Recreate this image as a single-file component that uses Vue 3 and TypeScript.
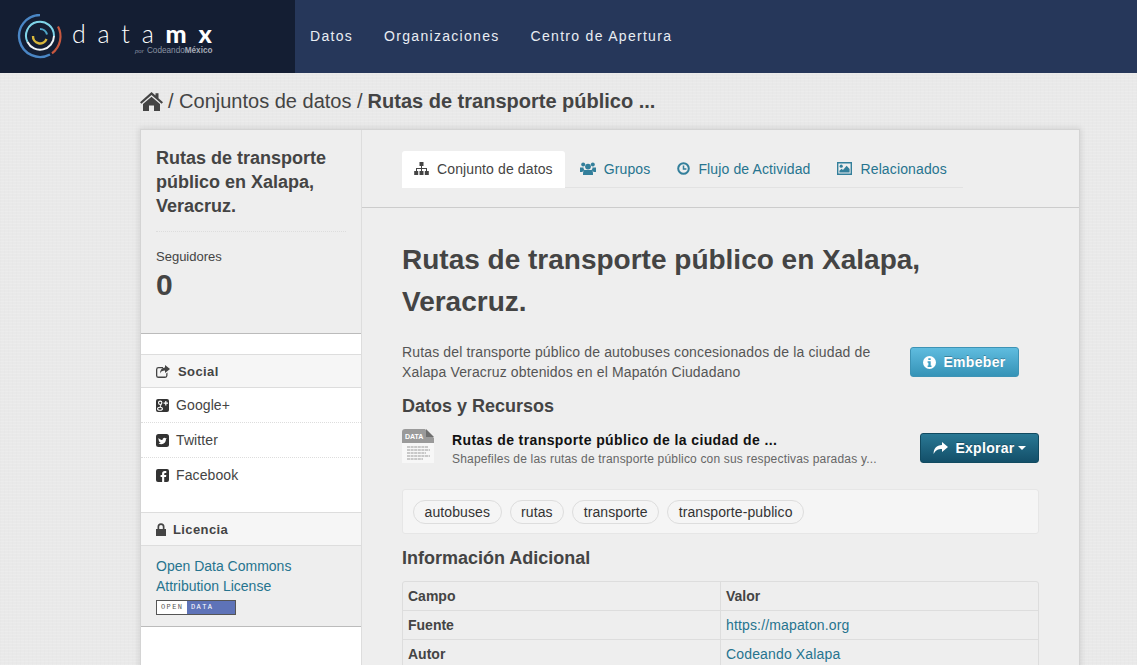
<script setup lang="ts">
const navLinks = ['Datos', 'Organizaciones', 'Centro de Apertura']
const tags = ['autobuses', 'rutas', 'transporte', 'transporte-publico']
const rows = [
  { field: 'Fuente', value: 'https://mapaton.org' },
  { field: 'Autor', value: 'Codeando Xalapa' }
]
</script>

<template>
  <div class="page">
    <header class="topbar">
      <a class="brand">
        <svg class="brand-mark" width="46" height="46" viewBox="0 0 46 46" fill="none">
          <path d="M23 1A21 21 0 1 0 33 40.5" stroke="#4a86c5" stroke-width="2.4" />
          <path d="M41 12.5A21 21 0 0 1 35 39.3" stroke="#c8583f" stroke-width="2.2" />
          <path d="M10.5 28A14 14 0 1 1 37 22" stroke="#7fd4e8" stroke-width="2" />
          <path d="M37 22A14 14 0 0 1 10.5 28" stroke="#f2f6f8" stroke-width="2" />
          <path d="M16 22A7 7 0 0 0 29.5 25" stroke="#d9b83c" stroke-width="2.4" />
          <path d="M23 15A7 7 0 0 1 30 20.5" stroke="#4fa6c8" stroke-width="2" />
        </svg>
        <span class="brand-text">
          <span class="brand-name">data<b>mx</b></span>
          <span class="brand-by"><i>por</i> Codeando<b>México</b></span>
        </span>
      </a>
      <nav class="nav">
        <a v-for="link in navLinks" :key="link">{{ link }}</a>
      </nav>
    </header>

    <main class="container">
      <div class="crumbs">
        <svg width="23" height="19" viewBox="0 0 23 19" fill="#444">
          <path d="M11.5 0 15.5 3.5V1.2H18.5V6.2L23 10.2 21.6 11.7 11.5 3 1.4 11.7 0 10.2Z" />
          <path d="M11.5 4.8 20 12V19H14V13.5H9V19H3V12Z" />
        </svg>
        <span>/ Conjuntos de datos /</span>
        <b>Rutas de transporte público ...</b>
      </div>

      <div class="wrapper">
        <aside class="sidebar">
          <section class="side-info">
            <h2>Rutas de transporte público en Xalapa, Veracruz.</h2>
            <div class="followers">
              <span>Seguidores</span>
              <strong>0</strong>
            </div>
          </section>

          <section class="social">
            <h3>
              <svg width="14" height="13" viewBox="0 0 14 13" fill="#444">
                <path d="M2.5 2H7V3.2H2.5A1.2 1.2 0 0 0 1.3 4.4V10.4A1.2 1.2 0 0 0 2.5 11.6H9A1.2 1.2 0 0 0 10.2 10.4V8.5L11.5 7.4V10.4A2.5 2.5 0 0 1 9 13H2.5A2.5 2.5 0 0 1 0 10.4V4.4A2.5 2.5 0 0 1 2.5 2Z" />
                <path d="M9 0 14 4 9 8V5.6C6.5 5.6 5 6.3 4 8.6 4 5 6 2.8 9 2.5Z" />
              </svg>
              Social
            </h3>
            <ul>
              <li>
                <svg width="13" height="13" viewBox="0 0 13 13">
                  <rect width="13" height="13" rx="2" fill="#333" />
                  <circle cx="4.2" cy="3.8" r="1.7" fill="none" stroke="#fff" stroke-width="1.1" />
                  <ellipse cx="4" cy="9.8" rx="2.4" ry="1.5" fill="none" stroke="#fff" stroke-width="1.1" />
                  <path d="M5 5.6 4.2 8" stroke="#fff" />
                  <path d="M9.8 2V6.4M7.6 4.2H12" stroke="#fff" stroke-width="1.2" />
                </svg>
                Google+
              </li>
              <li>
                <svg width="13" height="13" viewBox="0 0 13 13">
                  <rect width="13" height="13" rx="2.5" fill="#333" />
                  <path d="M2.6 4C4 5.4 5 6 6.5 6 6.4 4 8.4 3 9.6 4.2L10.8 3.9 10 5C10 8 8 10.2 5.4 10.2 4.2 10.2 3.2 9.9 2.4 9.3 3.4 9.4 4.2 9.1 4.9 8.6 3.9 8.4 3.4 7.9 3.1 7.2 2.7 6.2 2.3 5 2.6 4Z" fill="#fff" />
                </svg>
                Twitter
              </li>
              <li>
                <svg width="13" height="13" viewBox="0 0 13 13">
                  <rect width="13" height="13" rx="2" fill="#333" />
                  <path d="M8.2 13V8H10L10.3 6H8.2V4.8C8.2 4.2 8.5 3.9 9.1 3.9H10.3V2.1H8.7C7 2.1 6.1 3.1 6.1 4.6V6H4.6V8H6.1V13Z" fill="#fff" />
                </svg>
                Facebook
              </li>
            </ul>
          </section>

          <section class="license">
            <h3>
              <svg width="10" height="13" viewBox="0 0 10 13" fill="#444">
                <path d="M0 6H1.5V3.7A3.5 3.5 0 0 1 8.5 3.7V6H10V13H0ZM3.2 6H6.8V3.7A1.8 1.8 0 0 0 3.2 3.7Z" fill-rule="evenodd" />
              </svg>
              Licencia
            </h3>
            <div class="license-body">
              <a>Open Data Commons Attribution License</a>
              <span class="od-badge"><span>OPEN</span><span class="od-data">DATA</span></span>
            </div>
          </section>
        </aside>

        <div class="content">
          <div class="tabs-row">
            <ul class="tabs">
              <li class="active">
                <svg width="15" height="13" viewBox="0 0 15 13" fill="#444">
                  <path d="M5.5 0H9.5V4H8V6H13V9H14.8V13H10.8V9H12V7H8V9H9.5V13H5.5V9H7V7H3V9H4.2V13H.2V9H2V6H7V4H5.5Z" />
                </svg>
                Conjunto de datos
              </li>
              <li>
                <svg width="16" height="13" viewBox="0 0 16 13" fill="#337f9b">
                  <circle cx="3.2" cy="2.6" r="2" />
                  <circle cx="12.8" cy="2.6" r="2" />
                  <path d="M0 5.6H3.6C3.4 6.6 3.8 7.6 4.6 8.2 3.4 8.7 2.6 9.4 2.4 10H0Z" />
                  <path d="M16 5.6H12.4C12.6 6.6 12.2 7.6 11.4 8.2 12.6 8.7 13.4 9.4 13.6 10H16Z" />
                  <circle cx="8" cy="4.6" r="2.9" />
                  <path d="M4.4 8H11.6C12.8 8.6 13 10 13 13H3C3 10 3.2 8.6 4.4 8Z" />
                </svg>
                Grupos
              </li>
              <li>
                <svg width="13" height="13" viewBox="0 0 13 13" fill="none" stroke="#337f9b">
                  <circle cx="6.5" cy="6.5" r="5.3" stroke-width="2" />
                  <path d="M6.5 3.4V7H9.4" stroke-width="1.5" />
                </svg>
                Flujo de Actividad
              </li>
              <li>
                <svg width="15" height="13" viewBox="0 0 15 13" fill="#337f9b">
                  <path d="M0 0H15V13H0ZM1.4 1.4V11.6H13.6V1.4Z" fill-rule="evenodd" />
                  <circle cx="4.2" cy="4.2" r="1.6" />
                  <path d="M2.4 10.6V8.8L4.6 6.8 6 8 9.6 3.8 12.6 7V10.6Z" />
                </svg>
                Relacionados
              </li>
            </ul>
          </div>

          <article class="body">
            <h1>Rutas de transporte público en Xalapa, Veracruz.</h1>

            <div class="intro">
              <p>Rutas del transporte público de autobuses concesionados de la ciudad de Xalapa Veracruz obtenidos en el Mapatón Ciudadano</p>
              <button class="btn btn-info" type="button">
                <svg width="13" height="13" viewBox="0 0 13 13">
                  <circle cx="6.5" cy="6.5" r="6.5" fill="#fff" />
                  <path d="M5.3 2.2H7.7V4.1H5.3ZM4.6 5.2H7.7V9.4H8.5V10.9H4.6V9.4H5.4V6.7H4.6Z" fill="#3e9fc4" />
                </svg>
                Embeber
              </button>
            </div>

            <h3 class="heading">Datos y Recursos</h3>

            <div class="resource">
              <svg class="file-icon" width="32" height="34" viewBox="0 0 32 34">
                <path d="M0 3Q0 0 3 0H23L32 9V34H0Z" fill="#f7f7f7" />
                <path d="M0 3Q0 0 3 0H23L32 9V14H0Z" fill="#9a9a9a" />
                <path d="M24 0 32 8H24Z" fill="#6f6f6f" />
                <path d="M5 18H26M5 21H28M5 24H24M5 27H28M5 30H21" stroke="#999" stroke-dasharray="3 .6" />
                <text x="3" y="10" class="file-label">DATA</text>
              </svg>
              <div class="resource-text">
                <b>Rutas de transporte público de la ciudad de ...</b>
                <span>Shapefiles de las rutas de transporte público con sus respectivas paradas y...</span>
              </div>
              <button class="btn btn-primary" type="button">
                <svg width="15" height="12" viewBox="0 0 15 12" fill="#fff">
                  <path d="M9 0 15 5 9 10V7C5 7 2.6 8 .6 12 .6 6.5 3.5 3.3 9 3Z" />
                </svg>
                Explorar
                <i class="caret"></i>
              </button>
            </div>

            <div class="tags">
              <span v-for="tag in tags" :key="tag">{{ tag }}</span>
            </div>

            <h3 class="heading heading-info">Información Adicional</h3>

            <table>
              <thead>
                <tr>
                  <th>Campo</th>
                  <th>Valor</th>
                </tr>
              </thead>
              <tbody>
                <tr v-for="row in rows" :key="row.field">
                  <th>{{ row.field }}</th>
                  <td><a>{{ row.value }}</a></td>
                </tr>
              </tbody>
            </table>
          </article>
        </div>
      </div>
    </main>
  </div>
</template>

<style>
html,
body {
  margin: 0;
  overflow: hidden;
}
</style>

<style scoped>
.page {
  height: 665px;
  overflow: hidden;
  background-color: #e9e9e9;
  background-image:
    repeating-linear-gradient(0deg, rgba(255, 255, 255, 0.12) 0 1px, transparent 1px 3px),
    repeating-linear-gradient(90deg, rgba(0, 0, 0, 0.008) 0 1px, transparent 1px 4px);
  color: #444;
  font-family: 'Liberation Sans', Arial, sans-serif;
  font-size: 14px;
}

.topbar {
  display: flex;
  height: 73px;
  background: #26375a;
}

.brand {
  display: flex;
  width: 295px;
  box-sizing: border-box;
  padding: 14px 0 0 17px;
  background: #141e33;
  color: #fff;
}

.brand-text {
  display: flex;
  flex-direction: column;
  margin-left: 9px;
}

.brand-name {
  margin-top: 5px;
  font-family: Lato, sans-serif;
  font-size: 25px;
  font-weight: 300;
  line-height: 28px;
  letter-spacing: 11.8px;
  white-space: nowrap;
}

.brand-name b {
  font-weight: 900;
}

.brand-by {
  margin-top: -1px;
  padding-left: 63px;
  color: #8b93a3;
  font-size: 8.2px;
  line-height: 10px;
  white-space: nowrap;
}

.brand-by b {
  color: #a5abb7;
}

.brand-by i {
  font-size: 6px;
  margin-right: 1px;
}

.nav {
  display: flex;
  gap: 31px;
  padding: 27px 0 0 15px;
  color: #e9edf3;
  font-size: 14px;
  line-height: 19px;
  letter-spacing: 1.3px;
}

.container {
  width: 938px;
  margin-left: 141px;
}

.crumbs {
  display: flex;
  align-items: center;
  gap: 5px;
  height: 57px;
  font-size: 20px;
  white-space: nowrap;
}

.crumbs svg {
  margin-left: -1px;
}

.wrapper {
  display: flex;
  min-height: 700px;
  background: #fff;
  box-shadow: 0 0 0 1px #d4d4d4, 0 0 6px 2px rgba(0, 0, 0, 0.1);
}

.sidebar {
  flex: none;
  width: 221px;
  box-sizing: border-box;
  border-right: 1px solid #ddd;
  background: #fff;
}

.side-info {
  height: 204px;
  box-sizing: border-box;
  padding: 16px 15px 0;
  border-bottom: 1px solid #bbb;
  background: #eee;
}

.side-info h2 {
  margin: 0;
  padding-bottom: 13px;
  border-bottom: 1px dotted #ddd;
  color: #444;
  font-size: 18px;
  line-height: 24px;
}

.followers {
  display: flex;
  flex-direction: column;
  padding-top: 17px;
  font-size: 13px;
}

.followers span {
  line-height: 16px;
}

.followers strong {
  font-size: 30px;
  line-height: 40px;
}

.social {
  margin-top: 20px;
}

.sidebar h3 {
  display: flex;
  align-items: center;
  gap: 8px;
  height: 32px;
  margin: 0;
  padding-left: 15px;
  border-top: 1px solid #ddd;
  border-bottom: 1px solid #ddd;
  background: #f6f6f6;
  color: #444;
  font-size: 13px;
  letter-spacing: 0.4px;
}

.social ul {
  margin: 0;
  padding: 0 0 20px;
  list-style: none;
}

.social li {
  display: flex;
  align-items: center;
  gap: 7px;
  height: 34px;
  padding-left: 15px;
  border-bottom: 1px dotted #ddd;
  color: #444;
  letter-spacing: 0.1px;
}

.social li:last-child {
  border-bottom: 0;
}

.license h3 {
  gap: 7px;
}

.license-body {
  height: 81px;
  box-sizing: border-box;
  padding: 10px 15px 0;
  border-bottom: 1px solid #bbb;
  background: #eee;
}

.license-body a {
  display: block;
  width: 170px;
  color: #26748f;
  line-height: 20px;
}

.od-badge {
  display: flex;
  width: 80px;
  height: 15px;
  box-sizing: border-box;
  margin-top: 4px;
  border: 1px solid #555;
  color: #555;
  font-family: 'Liberation Mono', monospace;
  font-size: 7px;
  line-height: 13px;
  letter-spacing: 1.4px;
}

.od-badge span {
  width: 30px;
  box-sizing: border-box;
  padding-left: 4px;
  background: #fff;
}

.od-data {
  flex: 1;
  background: #5e73b8 !important;
  color: #fff;
}

.content {
  flex: 1;
  min-width: 0;
  background: #eee;
}

.tabs-row {
  height: 78px;
  box-sizing: border-box;
  padding: 21px 0 0 40px;
  border-bottom: 1px solid #ccc;
}

.tabs {
  display: flex;
  width: 561px;
  height: 36px;
  margin: 0;
  padding: 0;
  border-bottom: 1px solid #e2e2e2;
  list-style: none;
}

.tabs li {
  display: flex;
  align-items: center;
  gap: 8px;
  height: 36px;
  box-sizing: border-box;
  padding: 0 14px 1px 13px;
  color: #26748f;
  letter-spacing: 0.13px;
  white-space: nowrap;
}

.tabs li.active {
  height: 37px;
  margin-right: 2px;
  padding: 0 12px 2px;
  border-radius: 3px 3px 0 0;
  background: #fff;
  color: #444;
  letter-spacing: 0.12px;
}

.body {
  padding: 31px 40px 0;
}

.body h1 {
  margin: 0;
  color: #444;
  font-size: 28px;
  line-height: 42px;
}

.intro {
  display: flex;
  justify-content: space-between;
  align-items: flex-start;
  margin-top: 19px;
}

.intro p {
  width: 480px;
  margin: 0;
  color: #555;
  font-size: 14px;
  line-height: 20px;
  letter-spacing: 0.14px;
}

.btn {
  display: flex;
  align-items: center;
  justify-content: center;
  height: 30px;
  padding: 0;
  border-radius: 3px;
  color: #fff;
  font-family: inherit;
  font-size: 14px;
  font-weight: 700;
  letter-spacing: 0.3px;
  text-shadow: 0 -1px 0 rgba(0, 0, 0, 0.25);
}

.btn-info {
  gap: 7px;
  width: 109px;
  margin: 5px 20px 0 0;
  border: 1px solid #3d93b5;
  background: linear-gradient(#5fbcdf, #3593b7);
}

.btn-primary {
  gap: 7px;
  flex: none;
  width: 119px;
  margin-top: 4px;
  border: 1px solid #114a60;
  background: linear-gradient(#2a7894, #134f69);
}

.caret {
  width: 0;
  height: 0;
  margin-left: -4px;
  border-top: 4px solid #fff;
  border-right: 4px solid transparent;
  border-left: 4px solid transparent;
}

.heading {
  margin: 12px 0 0;
  color: #444;
  font-size: 18px;
  line-height: 24px;
}

.resource {
  display: flex;
  align-items: center;
  height: 36px;
  margin-top: 10px;
}

.file-icon {
  flex: none;
}

.file-label {
  fill: #fff;
  font-family: 'Liberation Sans', Arial, sans-serif;
  font-size: 7px;
  font-weight: 700;
}

.resource-text {
  display: flex;
  flex: 1;
  flex-direction: column;
  gap: 4px;
  margin-left: 18px;
  padding-top: 5px;
  white-space: nowrap;
}

.resource-text b {
  color: #111;
  font-size: 14px;
  line-height: 16px;
  letter-spacing: 0.4px;
}

.resource-text span {
  color: #666;
  font-size: 12px;
  line-height: 14px;
  letter-spacing: 0.18px;
}

.tags {
  display: flex;
  gap: 8px;
  height: 45px;
  box-sizing: border-box;
  margin-top: 25px;
  padding: 10px;
  border: 1px solid #e6e6e6;
  border-radius: 3px;
  background: #f5f5f5;
}

.tags span {
  height: 24px;
  box-sizing: border-box;
  padding: 0 10.5px;
  border: 1px solid #ddd;
  border-radius: 12px;
  background: #f5f5f5;
  color: #333;
  line-height: 22px;
  letter-spacing: 0.1px;
}

.heading-info {
  margin-top: 12px;
}

table {
  width: 100%;
  margin-top: 11px;
  border: 1px solid #ddd;
  border-radius: 3px;
  border-collapse: separate;
  border-spacing: 0;
  table-layout: fixed;
}

th,
td {
  height: 29px;
  box-sizing: border-box;
  padding: 0 5px;
  border-bottom: 1px solid #ddd;
  color: #444;
  font-size: 14px;
  text-align: left;
}

th + th,
td {
  border-left: 1px solid #ddd;
}

th:first-child {
  width: 317px;
}

td a {
  color: #26748f;
  letter-spacing: 0.15px;
}
</style>
